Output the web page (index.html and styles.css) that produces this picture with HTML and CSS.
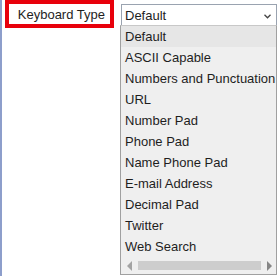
FILE: index.html
```html
<!DOCTYPE html>
<html lang="en">
<head>
  <meta charset="UTF-8">
  <title>Keyboard Type</title>
  <link rel="stylesheet" href="styles.css">
</head>
<body>
  <div class="panel">
    <div class="row">
      <label class="field-label">Keyboard Type</label>
      <div class="picker">
        <div class="select">
          <span>Default</span>
          <svg class="caret" width="7" height="5" viewBox="0 0 7 5"><path d="M0.5 0.8 L3.5 3.8 L6.5 0.8" fill="none" stroke="#444" stroke-width="1.3"/></svg>
        </div>
        <ul class="options">
          <li class="current">Default</li>
          <li>ASCII Capable</li>
          <li>Numbers and Punctuation</li>
          <li>URL</li>
          <li>Number Pad</li>
          <li>Phone Pad</li>
          <li>Name Phone Pad</li>
          <li>E-mail Address</li>
          <li>Decimal Pad</li>
          <li>Twitter</li>
          <li>Web Search</li>
          <li class="hscroll">
            <span class="arrow left"></span>
            <span class="thumb"></span>
            <span class="arrow right"></span>
          </li>
        </ul>
      </div>
    </div>
  </div>
</body>
</html>
```

FILE: styles.css
```css
body {
  margin: 0;
  font-family: "Liberation Sans", Arial, sans-serif;
  font-size: 13px;
  color: #1e1e1e;
  background: #fff;
}

.panel {
  height: 276px;
  border-left: 2px solid #8d9ecb;
  padding: 0 0 0 3px;
}

.row {
  display: flex;
  align-items: flex-start;
}

.field-label {
  width: 96px;
  height: 20px;
  border: 4px solid #e8000b;
  padding: 0 5px 0 0;
  text-align: right;
  line-height: 21px;
  font-size: 13px;
}

.picker {
  position: relative;
  margin-left: 7px;
}

.select {
  display: flex;
  justify-content: space-between;
  align-items: center;
  width: 146px;
  height: 20px;
  margin-top: 4px;
  padding: 0 5px 0 3px;
  border: 1px solid #9aa3b0;
  background: #fff;
}

.caret {
  margin-top: 2px;
}

.options {
  position: absolute;
  top: 25px;
  left: -1px;
  width: 155px;
  margin: 0;
  padding: 0;
  list-style: none;
  background: #efefef;
  border: 1px solid #a0a0a0;
  border-top: 1px solid #c8c8c8;
}

.options li {
  height: 21px;
  line-height: 21px;
  padding-left: 4px;
  white-space: nowrap;
  overflow: hidden;
}

.options li.current {
  background: #e6e6e6;
}

.options li.hscroll {
  display: flex;
  align-items: center;
  height: 17px;
  padding: 0 4px 0 6px;
  gap: 6px;
}

.arrow {
  width: 0;
  height: 0;
  border-top: 5px solid transparent;
  border-bottom: 5px solid transparent;
}

.arrow.left {
  border-right: 5px solid #a3a3a3;
}

.arrow.right {
  border-left: 5px solid #868686;
}

.thumb {
  flex: 1;
  height: 9px;
  background: #cdcdcd;
}
```
